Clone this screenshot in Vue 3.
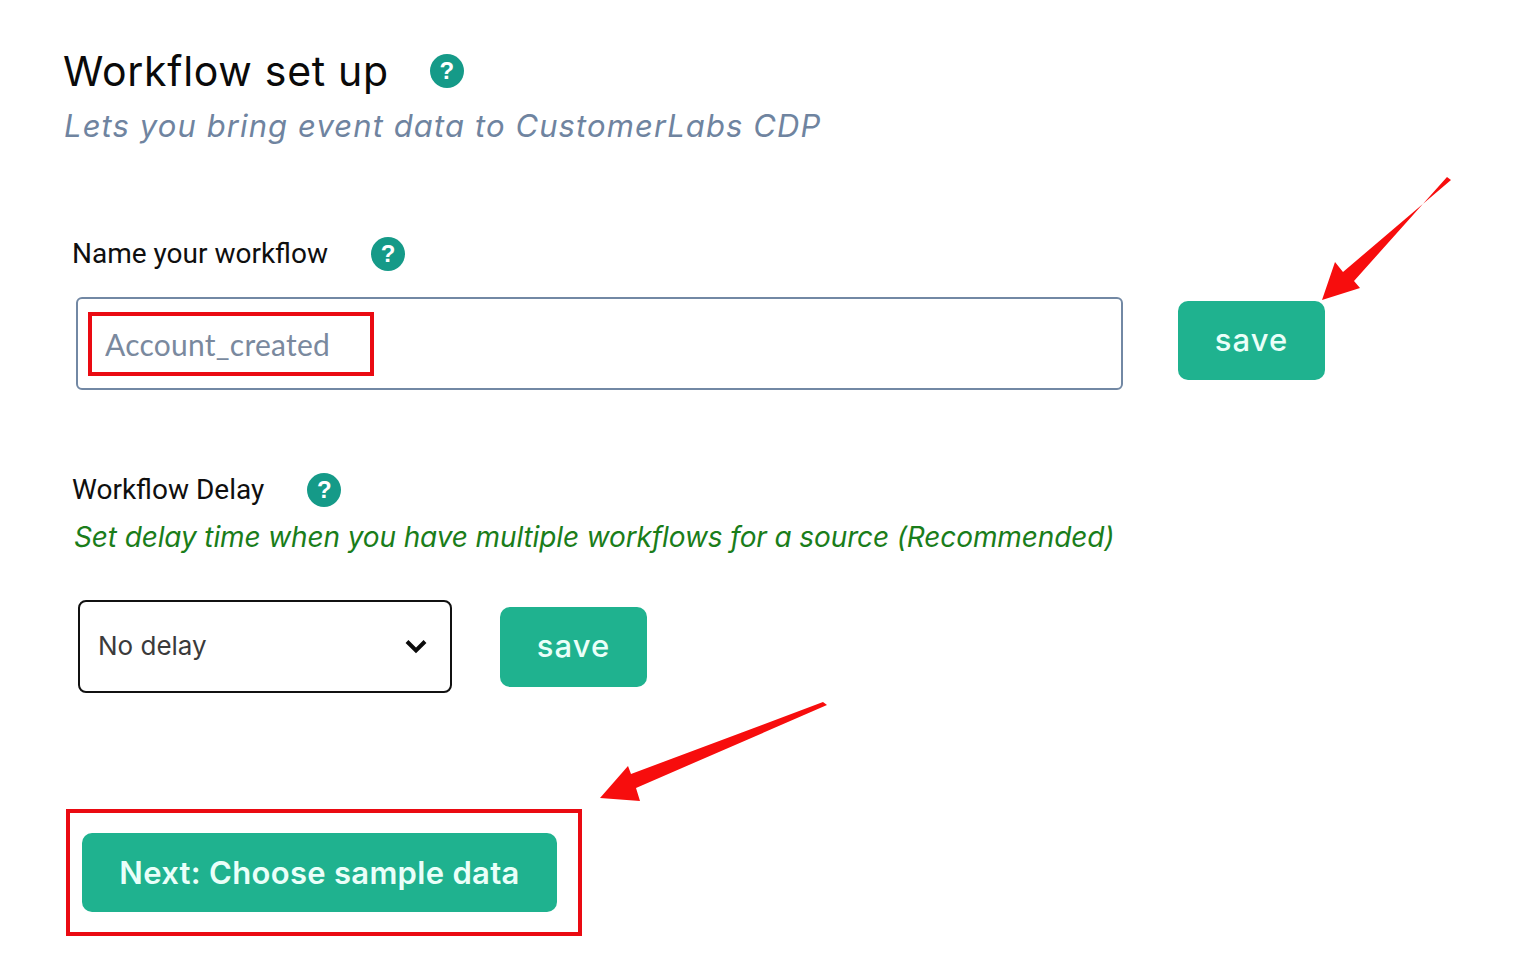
<template>
  <div class="page">
    <div class="title-row">
      <h1 class="title">Workflow set up</h1>
      <span class="help">?</span>
    </div>
    <p class="subtitle">Lets you bring event data to CustomerLabs CDP</p>

    <div class="label-row name-label">
      <label class="label">Name your workflow</label>
      <span class="help">?</span>
    </div>
    <div class="name-row">
      <div class="input-wrap">
        <input class="name-input" type="text" placeholder="Account_created" />
        <!-- annotation box -->
        <span class="mark-input"></span>
      </div>
      <button class="btn save-top">save</button>
    </div>

    <div class="label-row delay-label">
      <label class="label">Workflow Delay</label>
      <span class="help">?</span>
    </div>
    <p class="hint">Set delay time when you have multiple workflows for a source (Recommended)</p>
    <div class="delay-row">
      <div class="select-box">
        <span>No delay</span>
        <svg class="chevron" viewBox="0 0 24 16" width="24" height="16">
          <path d="M3 3.5 12 12.5 21 3.5" fill="none" stroke="#0b0b0b" stroke-width="4" />
        </svg>
      </div>
      <button class="btn save-delay">save</button>
    </div>

    <div class="next-box">
      <button class="btn next">Next: Choose sample data</button>
    </div>

    <!-- red arrows drawn over the screenshot -->
    <svg class="arrows" viewBox="0 0 1536 956" width="1536" height="956">
      <polygon fill="#f70d0d" points="1447,177 1451,180 1343,272 1335,262 1322,300 1360,288 1354,281" />
      <polygon fill="#f70d0d" points="823,702 827,705 636,788 640,801 600,798 628,766 631,774" />
    </svg>
  </div>
</template>

<script setup>
</script>

<style scoped>
.page {
  position: relative;
  width: 1536px;
  height: 956px;
  overflow: hidden;
  background: #fff;
  box-sizing: border-box;
  padding: 45px 0 0 63px;
  font-family: "Inter", "Liberation Sans", sans-serif;
}

.title-row,
.label-row {
  display: flex;
  align-items: center;
}

.title {
  margin: 0;
  font-size: 41px;
  line-height: 52px;
  font-weight: 400;
  letter-spacing: 0.7px;
  color: #0a0a0a;
}

.help {
  display: flex;
  align-items: center;
  justify-content: center;
  width: 34px;
  height: 34px;
  border-radius: 50%;
  background: #159a88;
  color: #fff;
  font-family: "Liberation Sans", sans-serif;
  font-size: 24px;
  font-weight: 700;
}

.title-row .help {
  margin-left: 41px;
}

.subtitle {
  margin: 3px 0 0 1px;
  font-size: 31px;
  line-height: 52px;
  font-style: italic;
  letter-spacing: 1.1px;
  color: #6f84a0;
}

.label-row {
  margin-left: 9px;
}

.name-label {
  margin-top: 84px;
}

.label {
  font-family: "Roboto", sans-serif;
  font-size: 28px;
  line-height: 36px;
  color: #0f0f0f;
}

.name-label .help {
  margin-left: 43px;
}

.name-row {
  display: flex;
  align-items: flex-start;
  margin: 25px 0 0 13px;
}

.input-wrap {
  position: relative;
  width: 1047px;
  height: 93px;
}

.name-input {
  display: block;
  width: 100%;
  height: 100%;
  box-sizing: border-box;
  padding: 0 0 0 27px;
  border: 2px solid #7288a4;
  border-radius: 6px;
  outline: none;
  background: #fff;
  font-family: "Lato", sans-serif;
  font-size: 30px;
  letter-spacing: 0.25px;
}

.name-input::placeholder {
  color: #7a899e;
  opacity: 1;
}

.mark-input {
  position: absolute;
  left: 12px;
  top: 15px;
  width: 286px;
  height: 64px;
  box-sizing: border-box;
  border: 4px solid #ea0a12;
}

.btn {
  border: none;
  border-radius: 10px;
  background: #1fb28f;
  color: #eafff9;
  font-family: "Inter", "Liberation Sans", sans-serif;
  font-size: 31px;
  font-weight: 500;
  letter-spacing: 1px;
  padding: 0 0 2px;
}

.save-top {
  width: 147px;
  height: 79px;
  margin: 4px 0 0 55px;
}

.delay-label {
  margin-top: 82px;
}

.delay-label .help {
  margin-left: 43px;
}

.hint {
  margin: 7px 0 0 11px;
  font-size: 28px;
  line-height: 44px;
  font-style: italic;
  letter-spacing: -0.12px;
  color: #1a7d1a;
}

.delay-row {
  display: flex;
  align-items: center;
  margin: 41px 0 0 15px;
}

.select-box {
  display: flex;
  align-items: center;
  justify-content: space-between;
  width: 374px;
  height: 93px;
  box-sizing: border-box;
  padding: 0 22px 2px 18px;
  border: 2px solid #111;
  border-radius: 8px;
  font-size: 26px;
  color: #3b3b3b;
}

.save-delay {
  width: 147px;
  height: 80px;
  margin-left: 48px;
}

.next-box {
  display: flex;
  align-items: center;
  width: 516px;
  height: 127px;
  box-sizing: border-box;
  margin: 116px 0 0 3px;
  padding-left: 12px;
  border: 4px solid #ea0a12;
}

.next {
  width: 475px;
  height: 79px;
  padding: 0;
  font-size: 31px;
  font-weight: 600;
  letter-spacing: 0.3px;
}

.arrows {
  position: absolute;
  left: 0;
  top: 0;
  pointer-events: none;
}
</style>
